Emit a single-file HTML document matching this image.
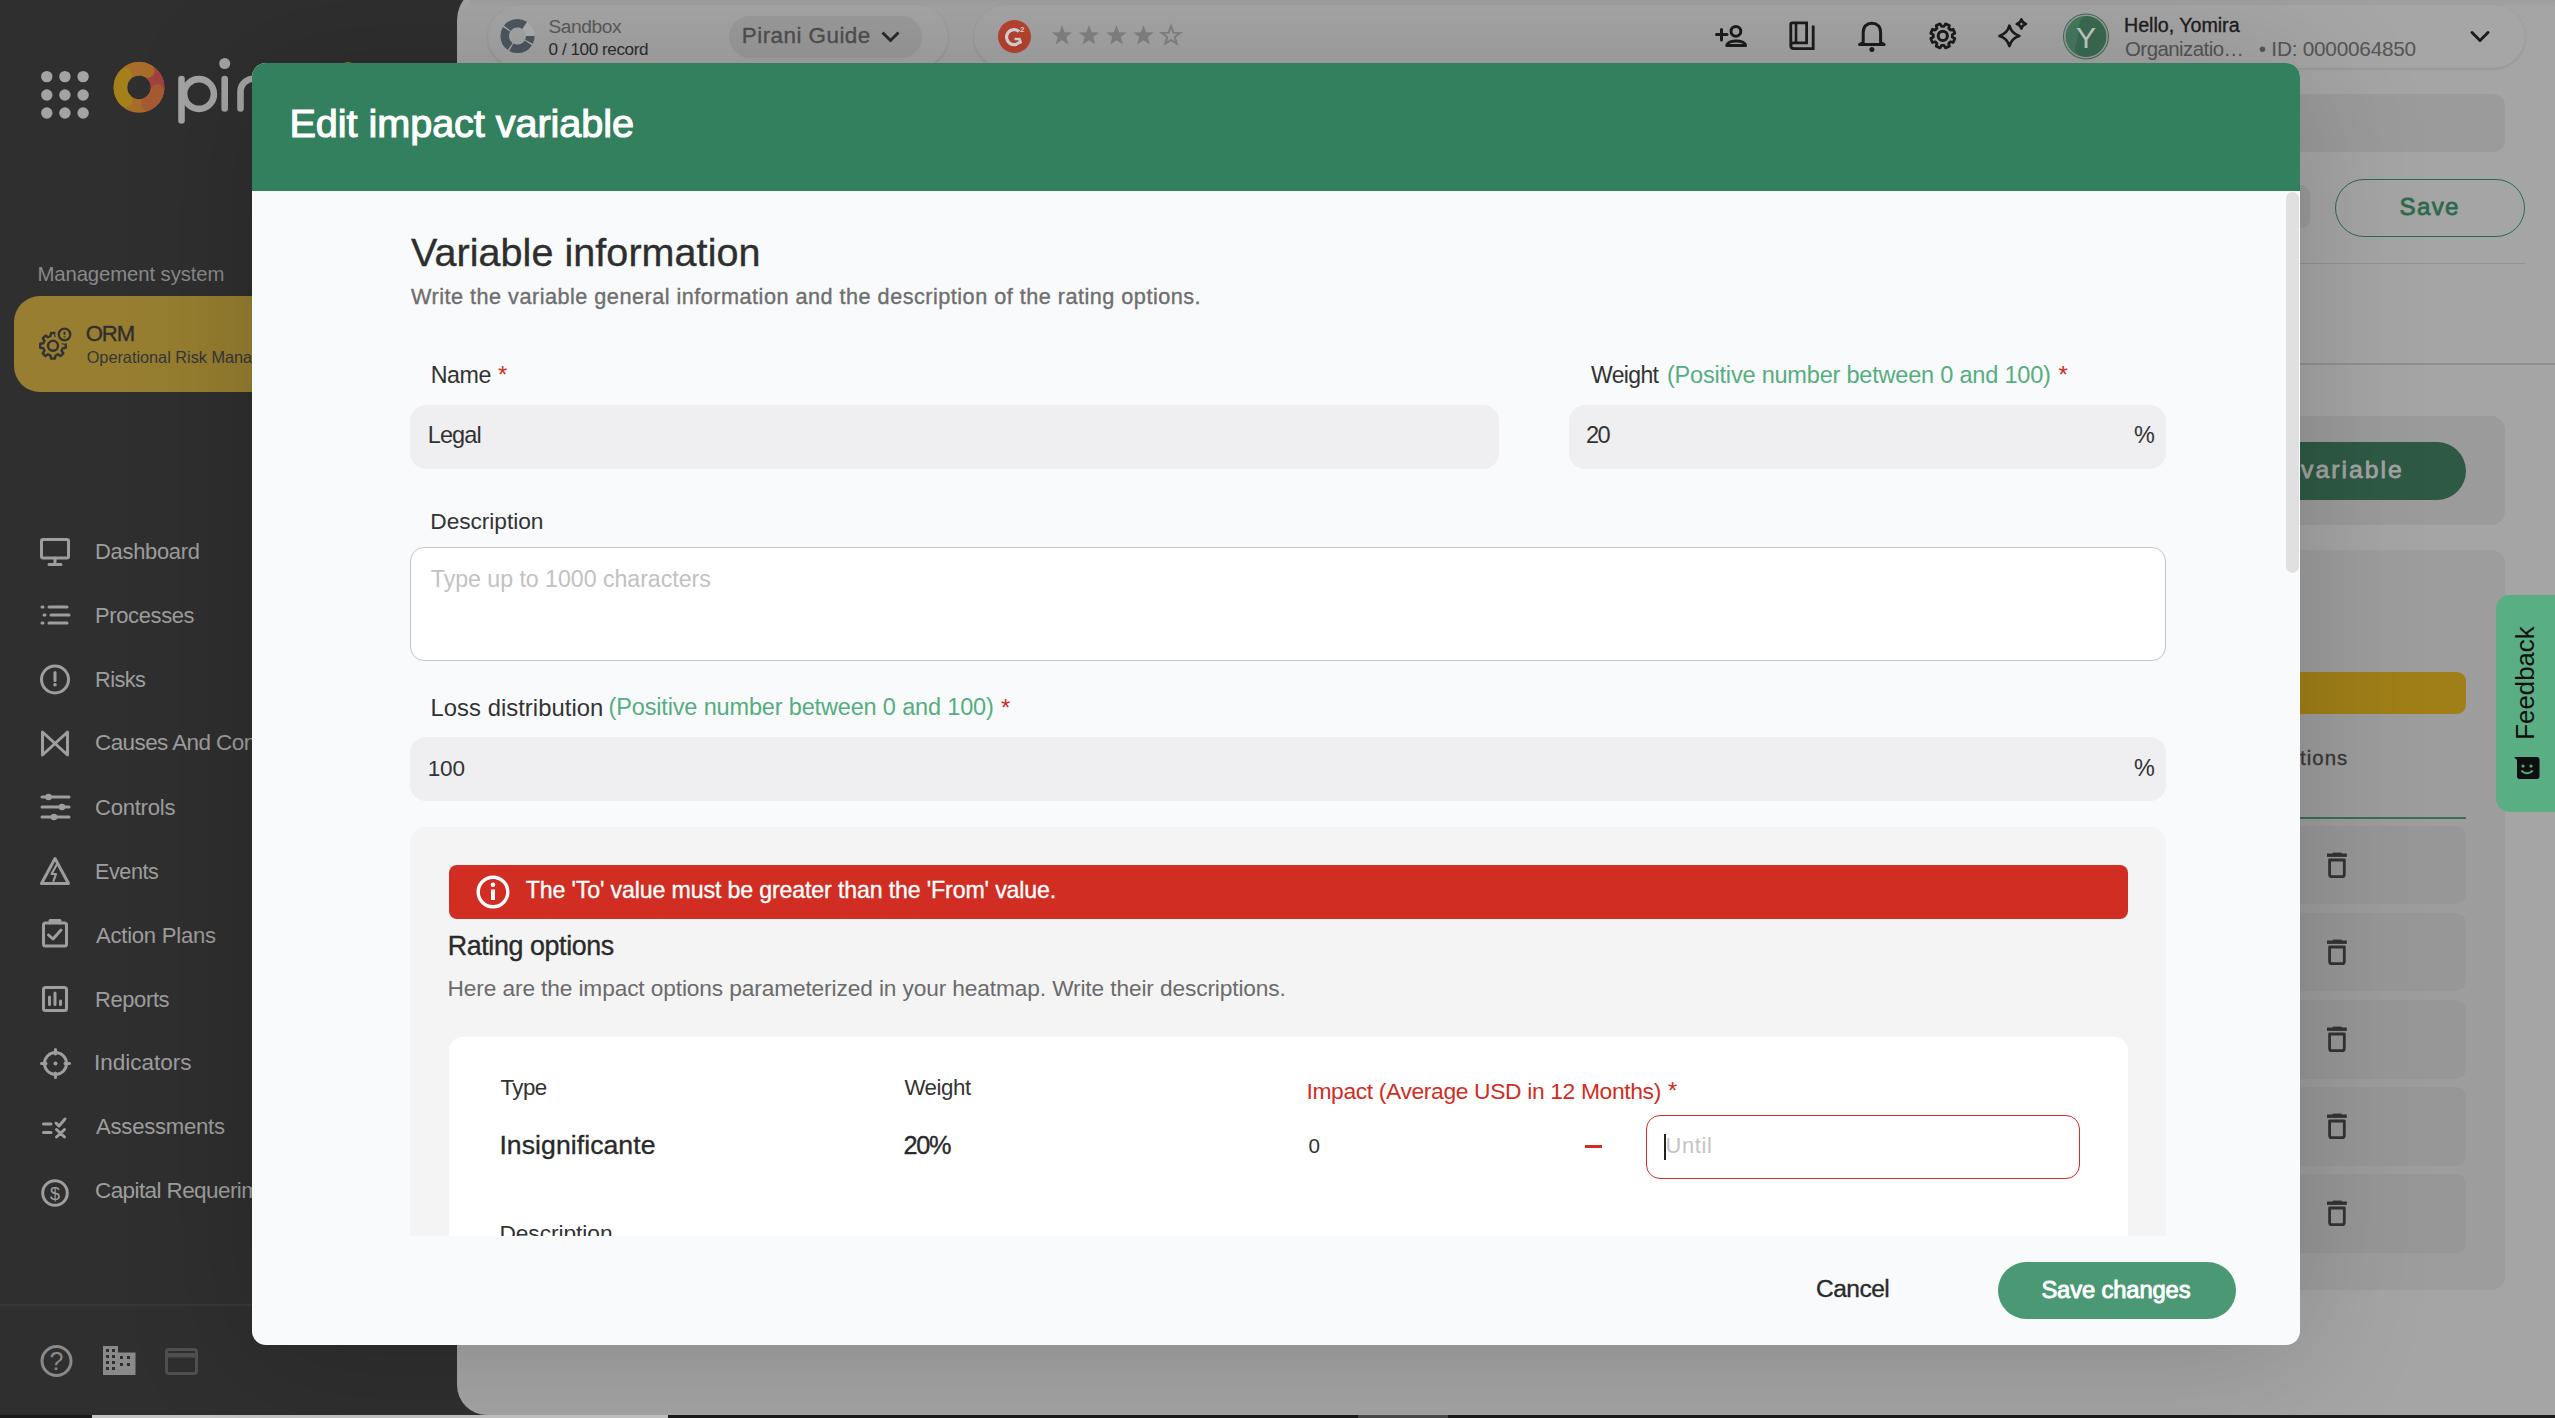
<!DOCTYPE html>
<html><head><meta charset="utf-8">
<style>
*{box-sizing:border-box;margin:0;padding:0}
html,body{width:2555px;height:1418px;overflow:hidden}
body{background:#2f2f2f;font-family:"Liberation Sans",sans-serif;position:relative;color:#333}
.a{position:absolute}
.L{position:absolute;left:0;top:0;width:2555px;height:1418px}
.t{position:absolute;white-space:nowrap;line-height:1}
.m{-webkit-text-stroke:0.35px currentColor}
svg{position:absolute;overflow:visible}
</style></head>
<body>
<!-- ============ BACKGROUND ============ -->
<div class="L" id="bg">
  <!-- bottom strip -->
  <div class="a" style="left:0;top:1415px;width:2555px;height:3px;background:#1b1b1b"></div>
  <div class="a" style="left:92px;top:1415px;width:576px;height:3px;background:#c4c4c4"></div>
  <div class="a" style="left:1358px;top:1415px;width:90px;height:3px;background:#4a4a4a"></div>

  <!-- sidebar logo -->
  <svg style="left:0;top:0" width="460" height="140">
    <g fill="#a3a3a3">
      <circle cx="46.8" cy="76.6" r="5.7"/><circle cx="64.9" cy="76.6" r="5.7"/><circle cx="83.1" cy="76.6" r="5.7"/>
      <circle cx="46.8" cy="95" r="5.7"/><circle cx="64.9" cy="95" r="5.7"/><circle cx="83.1" cy="95" r="5.7"/>
      <circle cx="46.8" cy="113" r="5.7"/><circle cx="64.9" cy="113" r="5.7"/><circle cx="83.1" cy="113" r="5.7"/>
    </g>
    <circle cx="139" cy="87.4" r="18.6" fill="none" stroke="#a86d2a" stroke-width="13.6"/>
    <path d="M 149.67 72.16 A 18.6 18.6 0 0 1 155.86 95.26" fill="none" stroke="#a0433f" stroke-width="13.6" stroke-linecap="butt"/>
    <path d="M 129.70 71.29 A 18.6 18.6 0 0 1 147.73 70.98" fill="none" stroke="#a86d2a" stroke-width="13.6" stroke-linecap="round"/>
    <path d="M 157.19 91.27 A 18.6 18.6 0 0 1 147.73 103.82" fill="none" stroke="#a55a33" stroke-width="13.6" stroke-linecap="round"/>
    <path d="M 125.85 100.55 A 18.6 18.6 0 0 1 125.18 74.95" fill="none" stroke="#a38019" stroke-width="13.6" stroke-linecap="round"/>
    <g fill="none" stroke="#a3a3a3" stroke-width="6.6" stroke-linecap="round">
      <path d="M 181.5 79 L 181.5 120.5"/>
      <circle cx="199" cy="94" r="14.9"/>
      <path d="M 224.7 79 L 224.7 108.5"/>
      <path d="M 240.5 108.5 L 240.5 92 A 13 13 0 0 1 256 79"/>
    </g>
    <circle cx="224.7" cy="63.5" r="5.5" fill="#a3a3a3"/>
    <circle cx="348" cy="71" r="9" fill="#a38019"/>
  </svg>

  <div class="a" style="left:0;top:1304px;width:460px;height:2px;background:#383838"></div>

  <!-- ORM tile -->
  <div class="a" style="left:14px;top:296px;width:460px;height:96px;background:#977e30;border-radius:26px"></div>
  <svg style="left:38px;top:327px" width="34" height="34" viewBox="0 0 34 34">
    <g fill="none" stroke="#333" stroke-width="2.4" stroke-linejoin="round">
      <path d="M12.5 9.5 L16.5 9.5 L17 12.5 L19.5 13.8 L22 12 L24.8 14.8 L23 17.3 L24.2 19.8 L27.3 20.3 L27.3 24.3 L24.2 24.8 L23 27.3 L24.8 29.8 L22 32.6 L19.5 30.8 L17 32 L16.5 35 L12.5 35 L12 32 L9.5 30.8 L7 32.6 L4.2 29.8 L6 27.3 L4.8 24.8 L1.7 24.3 L1.7 20.3 L4.8 19.8 L6 17.3 L4.2 14.8 L7 12 L9.5 13.8 L12 12.5 Z" transform="translate(0.5,-3.5)"/>
      <circle cx="15" cy="18.8" r="5"/>
    </g>
    <circle cx="26.5" cy="7.5" r="9.3" fill="#977e30"/>
    <circle cx="26.5" cy="7.5" r="5.8" fill="none" stroke="#333" stroke-width="2.3"/>
    <path d="M26.5 4.8 L26.5 8 M26.5 9.3 L26.5 10.6" stroke="#333" stroke-width="1.9"/>
  </svg>

  <!-- sidebar nav icons -->
  <svg style="left:0;top:500px" width="90" height="740">
    <g fill="none" stroke="#9e9e9e" stroke-width="3" stroke-linejoin="round" stroke-linecap="round">
      <!-- dashboard monitor -->
      <rect x="41.5" y="39.5" width="27" height="18.5" rx="1.5"/>
      <path d="M55 58 L55 64 M49 64.5 L61 64.5"/>
      <!-- processes list -->
      <path d="M49 107 L67 107 M51 115 L69 115 M49 123 L67 123 M42 107 L43 107 M44 115 L45 115 M42 123 L43 123"/>
      <!-- risks circle ! -->
      <circle cx="55" cy="179.5" r="13.5"/>
      <path d="M55 172.5 L55 180.5"/>
      <!-- causes bowtie -->
      <path d="M42.5 232 L67.5 255 L67.5 232 L42.5 255 Z"/>
      <!-- controls sliders -->
      <path d="M42 297 L69 297 M42 307 L69 307 M42 317 L69 317"/>
      <!-- events triangle -->
      <path d="M55 358.5 L68.5 383.5 L41.5 383.5 Z"/>
      <!-- action plans clipboard -->
      <rect x="43.5" y="423" width="23" height="23" rx="2"/>
      <path d="M50 423 L50 420.5 L60 420.5 L60 423 M48.5 435 L53 439 L61 430"/>
      <!-- reports -->
      <rect x="43.5" y="487.5" width="23" height="23" rx="2"/>
      <path d="M49.5 504.5 L49.5 497 M55 504.5 L55 493 M60.5 504.5 L60.5 501"/>
      <!-- indicators crosshair -->
      <circle cx="55.5" cy="563.5" r="11"/>
      <path d="M55.5 549.5 L55.5 554 M55.5 573 L55.5 577.5 M41.5 563.5 L46 563.5 M65 563.5 L69.5 563.5"/>
      <!-- assessments -->
      <path d="M43.5 624 L51 624 M43.5 632.5 L51 632.5 M56 623 L59 626 L65 619 M56.5 629.5 L64.5 637 M64.5 629.5 L56.5 637"/>
      <!-- capital $ circle -->
      <circle cx="55" cy="693" r="12.3"/>
    </g>
    <g fill="#9e9e9e">
      <circle cx="55" cy="184.8" r="1.8"/>
      <circle cx="48.5" cy="297" r="3.3"/><circle cx="62" cy="307" r="3.3"/><circle cx="54" cy="317" r="3.3"/>
      <circle cx="55.5" cy="563.5" r="2"/>
    </g>
    <path d="M56.5 365 L51.5 374 L56 374 L53.5 381" fill="none" stroke="#9e9e9e" stroke-width="2.2" stroke-linecap="round" stroke-linejoin="round"/>
    <text x="55" y="700" font-family="Liberation Sans" font-size="18" fill="#9e9e9e" text-anchor="middle" style="-webkit-text-stroke:0.6px #9e9e9e">$</text>
  </svg>

  <!-- sidebar bottom icons -->
  <svg style="left:0;top:1330px" width="220" height="60">
    <circle cx="56.5" cy="31" r="14.5" fill="none" stroke="#8a8a8a" stroke-width="3"/>
    <text x="56.5" y="39.5" font-family="Liberation Sans" font-size="25" fill="#8a8a8a" text-anchor="middle" style="-webkit-text-stroke:0.8px #8a8a8a">?</text>
    <path d="M103 16 L118 16 L118 22.5 L135.5 22.5 L135.5 45 L103 45 Z" fill="#8a8a8a"/>
    <g fill="#2f2f2f">
      <rect x="106" y="19" width="3" height="3"/><rect x="112" y="19" width="3" height="3"/>
      <rect x="106" y="25" width="3" height="3"/><rect x="112" y="25" width="3" height="3"/>
      <rect x="106" y="31" width="3" height="3"/><rect x="112" y="31" width="3" height="3"/>
      <rect x="106" y="37" width="3" height="3"/><rect x="112" y="37" width="3" height="3"/>
      <rect x="120" y="26" width="3" height="3"/><rect x="127" y="26" width="3" height="3"/>
      <rect x="120" y="33" width="3" height="3"/><rect x="127" y="33" width="3" height="3"/>
    </g>
    <rect x="166.5" y="19.5" width="30" height="24" rx="2.5" fill="none" stroke="#505050" stroke-width="3"/>
    <rect x="166.5" y="23" width="30" height="4.5" fill="#505050"/>
  </svg>

  <!-- main content area -->
  <div class="a" id="main" style="left:457px;top:-14px;width:2098px;height:1429px;background:#a5a5a5;border-radius:34px 0 0 30px"></div>
  <div class="a" style="left:470px;top:0;width:2085px;height:6px;background:linear-gradient(rgba(0,0,0,0.045),rgba(0,0,0,0.015))"></div>
  <!-- top pills -->
  <div class="a" style="left:488px;top:5px;width:460px;height:63px;background:#a6a6a6;border-radius:32px;box-shadow:0 1px 3px rgba(0,0,0,0.12)"></div>
  <div class="a" style="left:974px;top:5px;width:1551px;height:63px;background:#a6a6a6;border-radius:32px;box-shadow:0 1px 3px rgba(0,0,0,0.12)"></div>
  <div class="a" style="left:729px;top:16px;width:193px;height:42px;background:#9c9c9c;border-radius:21px"></div>
  <!-- sandbox icon -->
  <svg style="left:500px;top:18px" width="36" height="36" viewBox="0 0 36 36">
    <circle cx="17.5" cy="18" r="12.8" fill="none" stroke="#b0b0b0" stroke-width="8.6"/>
    <circle cx="17.5" cy="18" r="12.8" fill="none" stroke="#4d5760" stroke-width="8.6" stroke-dasharray="6 1.2 19.3 1.2 19.3 1.2 19.3 12.9" />
  </svg>
  <!-- chevron pirani guide -->
  <svg style="left:880px;top:30px" width="22" height="14"><path d="M2.5 2.5 L10.5 10.5 L18.5 2.5" fill="none" stroke="#2c2c2c" stroke-width="3"/></svg>
  <!-- G2 -->
  <div class="a" style="left:998px;top:19.5px;width:33px;height:33px;border-radius:50%;background:#b8442f"></div>
  <svg style="left:998px;top:19.5px" width="33" height="33" viewBox="0 0 33 33">
    <path d="M21 11.5 A 7.5 7.5 0 1 0 22.5 21" fill="none" stroke="#d8d8d8" stroke-width="3.2"/>
    <path d="M16.5 19 L21.5 19 L23 23.5" fill="none" stroke="#d8d8d8" stroke-width="2.6"/>
    <text x="22" y="12" font-family="Liberation Sans" font-size="8" font-weight="bold" fill="#d8d8d8">2</text>
  </svg>
  <!-- stars -->
  <svg style="left:1050px;top:23px" width="140" height="26" viewBox="0 0 140 26">
    <g fill="#838383">
      <path d="M12 2 L14.6 9.2 L22.3 9.4 L16.2 14.1 L18.4 21.5 L12 17.2 L5.6 21.5 L7.8 14.1 L1.7 9.4 L9.4 9.2 Z"/>
      <path transform="translate(27,0)" d="M12 2 L14.6 9.2 L22.3 9.4 L16.2 14.1 L18.4 21.5 L12 17.2 L5.6 21.5 L7.8 14.1 L1.7 9.4 L9.4 9.2 Z"/>
      <path transform="translate(54.5,0)" d="M12 2 L14.6 9.2 L22.3 9.4 L16.2 14.1 L18.4 21.5 L12 17.2 L5.6 21.5 L7.8 14.1 L1.7 9.4 L9.4 9.2 Z"/>
      <path transform="translate(81.5,0)" d="M12 2 L14.6 9.2 L22.3 9.4 L16.2 14.1 L18.4 21.5 L12 17.2 L5.6 21.5 L7.8 14.1 L1.7 9.4 L9.4 9.2 Z"/>
    </g>
    <path transform="translate(110.2,1.4) scale(0.9)" d="M12 2 L14.6 9.2 L22.3 9.4 L16.2 14.1 L18.4 21.5 L12 17.2 L5.6 21.5 L7.8 14.1 L1.7 9.4 L9.4 9.2 Z" fill="none" stroke="#838383" stroke-width="2.2"/>
  </svg>
  <!-- right icons -->
  <svg style="left:1700px;top:10px" width="800" height="56">
    <g fill="none" stroke="#1c1c1c" stroke-width="3" stroke-linecap="round" stroke-linejoin="round">
      <!-- add person -->
      <path d="M16.5 24.6 L27 24.6 M21.5 19.5 L21.5 30"/>
      <circle cx="35.9" cy="21.3" r="4.9"/>
      <path d="M26.8 35.5 C27.5 29.5 45 29.5 45.5 35.5 Z"/>
      <!-- book -->
      <path d="M90.8 36.5 L90.8 14.2 Q90.8 12.8 92.3 12.8 L106.6 12.8 L106.6 32.8 L93.8 32.8 Q90.8 32.8 90.8 35.5 Q90.8 38.6 93.8 38.6 L113.2 38.6 L113.2 15.6" stroke-width="2.8" stroke-linecap="butt" stroke-linejoin="miter"/>
      <path d="M96 13 L96 32.5" stroke-width="2.6"/>
      <!-- bell -->
      <path d="M163.2 32.5 L163.2 22.5 C163.2 16.5 166.8 13.2 171.9 13.2 C177 13.2 180.6 16.5 180.6 22.5 L180.6 32.5 L184.2 34.6 L159.6 34.6 Z"/>
      <!-- gear -->
      <circle cx="242.8" cy="25.9" r="4.6"/>
      <path d="M252.32 27.15 L254.81 28.56 L253.17 32.51 L250.42 31.74 L248.64 33.52 L249.41 36.27 L245.46 37.91 L244.05 35.42 L241.55 35.42 L240.14 37.91 L236.19 36.27 L236.96 33.52 L235.18 31.74 L232.43 32.51 L230.79 28.56 L233.28 27.15 L233.28 24.65 L230.79 23.24 L232.43 19.29 L235.18 20.06 L236.96 18.28 L236.19 15.53 L240.14 13.89 L241.55 16.38 L244.05 16.38 L245.46 13.89 L249.41 15.53 L248.64 18.28 L250.42 20.06 L253.17 19.29 L254.81 23.24 L252.32 24.65 Z" stroke-width="2.8"/>
      <!-- sparkle -->
      <path d="M309.40 15.70 Q311.60 23.66 319.40 25.90 Q311.60 28.14 309.40 36.10 Q307.20 28.14 299.40 25.90 Q307.20 23.66 309.40 15.70 Z" stroke-width="2.6"/>
      <path d="M321.40 9.40 Q322.32 13.08 326.00 14.00 Q322.32 14.92 321.40 18.60 Q320.48 14.92 316.80 14.00 Q320.48 13.08 321.40 9.40 Z" stroke-width="2.6"/>
      <!-- chevron -->
      <path d="M772 22.5 L780 30.5 L788 22.5"/>
    </g>
    <circle cx="171.9" cy="39.6" r="2.5" fill="#1c1c1c"/>
    <circle cx="386" cy="26.5" r="23" fill="#3a6b51"/>
    <path d="M386 6 C 375 10, 381 24, 376 34 C 373 40, 378 45, 383 47 A 20.5 20.5 0 0 1 386 6 Z" fill="#467a5f"/>
    <circle cx="386" cy="26.5" r="21.2" fill="none" stroke="#9a9f9c" stroke-width="1.6"/>
    <text x="386" y="37.8" font-family="Liberation Sans" font-size="30" fill="#c4c8c6" text-anchor="middle">Y</text>
  </svg>

  <!-- right side content (behind modal) -->
  <div class="a" style="left:2260px;top:94px;width:245px;height:58px;background:#9b9b9b;border-radius:12px"></div>
  <div class="a" style="left:2260px;top:185px;width:50px;height:44px;background:#9b9b9b;border-radius:10px"></div>
  <div class="a" style="left:2335px;top:179px;width:190px;height:58px;border:1.5px solid #2f6b4f;border-radius:29px"></div>
  <div class="a" style="left:2260px;top:263px;width:265px;height:1px;background:#939393"></div>
  <div class="a" style="left:2260px;top:363px;width:295px;height:2px;background:#909090"></div>
  <div class="a" style="left:2260px;top:416px;width:245px;height:109px;background:#9b9b9b;border-radius:14px"></div>
  <div class="a" style="left:2200px;top:442px;width:266px;height:58px;background:#2e5a45;border-radius:29px"></div>
  <div class="a" style="left:2260px;top:550px;width:245px;height:740px;background:#9d9d9d;border-radius:14px"></div>
  <div class="a" style="left:2260px;top:672px;width:206px;height:42px;background:#a07f18;border-radius:9px"></div>
  <div class="a" style="left:2260px;top:817px;width:206px;height:2px;background:#3e6e55"></div>
  <div class="a" style="left:2260px;top:826px;width:206px;height:78px;background:#979797;border-radius:10px"></div>
  <div class="a" style="left:2260px;top:913px;width:206px;height:78px;background:#979797;border-radius:10px"></div>
  <div class="a" style="left:2260px;top:1000px;width:206px;height:79px;background:#979797;border-radius:10px"></div>
  <div class="a" style="left:2260px;top:1087px;width:206px;height:79px;background:#979797;border-radius:10px"></div>
  <div class="a" style="left:2260px;top:1174px;width:206px;height:79px;background:#979797;border-radius:10px"></div>
  <svg style="left:2320px;top:845px" width="40" height="400">
    <g fill="none" stroke="#333" stroke-width="2.8" stroke-linejoin="round">
      <path d="M9.6 15 L9.6 29.4 Q9.6 31.6 11.8 31.6 L22.1 31.6 Q24.3 31.6 24.3 29.4 L24.3 15 Z"/>
      <path transform="translate(0,87)" d="M9.6 15 L9.6 29.4 Q9.6 31.6 11.8 31.6 L22.1 31.6 Q24.3 31.6 24.3 29.4 L24.3 15 Z"/>
      <path transform="translate(0,174)" d="M9.6 15 L9.6 29.4 Q9.6 31.6 11.8 31.6 L22.1 31.6 Q24.3 31.6 24.3 29.4 L24.3 15 Z"/>
      <path transform="translate(0,261)" d="M9.6 15 L9.6 29.4 Q9.6 31.6 11.8 31.6 L22.1 31.6 Q24.3 31.6 24.3 29.4 L24.3 15 Z"/>
      <path transform="translate(0,348)" d="M9.6 15 L9.6 29.4 Q9.6 31.6 11.8 31.6 L22.1 31.6 Q24.3 31.6 24.3 29.4 L24.3 15 Z"/>
    </g>
    <rect x="7" y="8.5" width="19.8" height="3.4" fill="#333"/><rect x="12.7" y="7.6" width="9" height="1.5" fill="#333"/><rect x="7" y="95.5" width="19.8" height="3.4" fill="#333"/><rect x="12.7" y="94.6" width="9" height="1.5" fill="#333"/><rect x="7" y="182.5" width="19.8" height="3.4" fill="#333"/><rect x="12.7" y="181.6" width="9" height="1.5" fill="#333"/><rect x="7" y="269.5" width="19.8" height="3.4" fill="#333"/><rect x="12.7" y="268.6" width="9" height="1.5" fill="#333"/><rect x="7" y="356.5" width="19.8" height="3.4" fill="#333"/><rect x="12.7" y="355.6" width="9" height="1.5" fill="#333"/>
  </svg>
  <!-- feedback tab -->
  <div class="a" style="left:2496px;top:595px;width:70px;height:217px;background:#5aae84;border-radius:14px 0 0 14px"></div>
  <div class="t" style="left:2526px;top:683px;font-size:25.8px;color:#0f0f0f;transform:translate(-50%,-50%) rotate(-90deg);">Feedback</div>
  <svg style="left:2512px;top:754px" width="30" height="28" viewBox="0 0 30 28">
    <path d="M2 3 L25 3 C26.5 3 27.5 4 27.5 5.5 L27.5 22.5 C27.5 24 26.5 25 25 25 L7.5 25 C6 25 5 24 5 22.5 L5 6 Z" fill="#0f0f0f"/>
    <circle cx="11" cy="12" r="1.6" fill="#5aae84"/><circle cx="19" cy="12" r="1.6" fill="#5aae84"/>
    <path d="M9.5 16.5 C12 20 18 20 20.5 16.5" fill="none" stroke="#5aae84" stroke-width="2"/>
  </svg>
  <div class="t" style="left:37.40px;top:263.79px;font-size:20.33px;font-weight:normal;color:#898989;letter-spacing:-0.101px;">Management system</div>
<div class="t" style="left:85.70px;top:323.26px;font-size:22.14px;font-weight:normal;color:#2e2e2e;letter-spacing:-1.094px;-webkit-text-stroke:0.35px currentColor;">ORM</div>
<div class="t" style="left:86.70px;top:349.02px;font-size:16.28px;font-weight:normal;color:#363636;letter-spacing:0.000px;">Operational Risk Management</div>
<div class="t" style="left:95.00px;top:540.64px;font-size:21.92px;font-weight:normal;color:#9e9e9e;letter-spacing:-0.273px;">Dashboard</div>
<div class="t" style="left:95.00px;top:604.61px;font-size:21.95px;font-weight:normal;color:#9e9e9e;letter-spacing:-0.356px;">Processes</div>
<div class="t" style="left:95.00px;top:668.81px;font-size:21.72px;font-weight:normal;color:#9e9e9e;letter-spacing:-0.557px;">Risks</div>
<div class="t" style="left:95.00px;top:732.12px;font-size:22.53px;font-weight:normal;color:#9e9e9e;letter-spacing:0.000px;letter-spacing:-0.6px;">Causes And Consequences</div>
<div class="t" style="left:95.00px;top:796.50px;font-size:22.09px;font-weight:normal;color:#9e9e9e;letter-spacing:-0.253px;">Controls</div>
<div class="t" style="left:95.00px;top:860.93px;font-size:21.58px;font-weight:normal;color:#9e9e9e;letter-spacing:-0.428px;">Events</div>
<div class="t" style="left:96.00px;top:924.50px;font-size:22.08px;font-weight:normal;color:#9e9e9e;letter-spacing:-0.244px;">Action Plans</div>
<div class="t" style="left:95.00px;top:988.62px;font-size:21.94px;font-weight:normal;color:#9e9e9e;letter-spacing:-0.374px;">Reports</div>
<div class="t" style="left:94.00px;top:1052.14px;font-size:22.51px;font-weight:normal;color:#9e9e9e;letter-spacing:-0.011px;">Indicators</div>
<div class="t" style="left:96.00px;top:1116.46px;font-size:22.14px;font-weight:normal;color:#9e9e9e;letter-spacing:-0.250px;">Assessments</div>
<div class="t" style="left:95.00px;top:1180.12px;font-size:22.53px;font-weight:normal;color:#9e9e9e;letter-spacing:0.000px;letter-spacing:-0.6px;">Capital Requeriments</div>
<div class="t" style="left:548.50px;top:16.75px;font-size:19.19px;font-weight:normal;color:#5a5a5a;letter-spacing:-0.426px;">Sandbox</div>
<div class="t" style="left:548.50px;top:40.50px;font-size:17.13px;font-weight:normal;color:#2c2c2c;letter-spacing:-0.434px;">0 / 100 record</div>
<div class="t" style="left:741.80px;top:24.85px;font-size:22.38px;font-weight:normal;color:#505050;letter-spacing:0.483px;-webkit-text-stroke:0.35px currentColor;">Pirani Guide</div>
<div class="t" style="left:2124.00px;top:15.83px;font-size:19.69px;font-weight:normal;color:#1e1e1e;letter-spacing:-0.034px;-webkit-text-stroke:0.35px currentColor;">Hello, Yomira</div>
<div class="t" style="left:2125.00px;top:39.18px;font-size:20.45px;font-weight:normal;color:#555;letter-spacing:-0.538px;">Organizatio…</div>
<div class="t" style="left:2258.80px;top:38.89px;font-size:20.79px;font-weight:normal;color:#555;letter-spacing:-0.240px;">• ID: 0000064850</div>
<div class="t" style="left:2399.60px;top:195.47px;font-size:24.13px;font-weight:normal;color:#2d6a4d;letter-spacing:1.285px;-webkit-text-stroke:0.8px #2d6a4d;">Save</div>
<div class="t" style="left:2301.00px;top:458.08px;font-size:24.71px;font-weight:normal;color:#a3a3a3;letter-spacing:2.039px;-webkit-text-stroke:0.8px #a3a3a3;">variable</div>
<div class="t" style="left:2300.00px;top:748.47px;font-size:20.35px;font-weight:normal;color:#383838;letter-spacing:1.056px;-webkit-text-stroke:0.35px currentColor;">tions</div>
</div>

<!-- ============ MODAL ============ -->
<div class="a" style="left:252px;top:63px;width:2048px;height:1282px;background:#f9fafb;border-radius:14px;overflow:hidden;box-shadow:0 8px 130px rgba(0,0,0,0.18)">
  <div class="a" style="left:0;top:0;width:2048px;height:128px;background:#33805e"></div>
  <div class="a" style="left:2034px;top:129px;width:13px;height:381px;background:#e0e0e0;border-radius:7px"></div>
</div>
<!-- scroll content -->
<div class="L" style="clip-path:inset(191px 255px 182px 252px)">
  <div class="a" style="left:410px;top:405px;width:1089px;height:64px;background:#efeff1;border-radius:16px"></div>
  <div class="a" style="left:1569px;top:405px;width:597px;height:64px;background:#efeff1;border-radius:16px"></div>
  <div class="a" style="left:410px;top:547px;width:1756px;height:114px;background:#fff;border:1.5px solid #c4c4c4;border-radius:14px"></div>
  <div class="a" style="left:410px;top:737px;width:1756px;height:64px;background:#efeff1;border-radius:16px"></div>
  <div class="a" style="left:410px;top:827px;width:1756px;height:600px;background:#f4f4f4;border-radius:16px"></div>
  <div class="a" style="left:449px;top:865px;width:1679px;height:54px;background:#d12d22;border-radius:8px"></div>
  <svg style="left:470px;top:869px" width="46" height="46" viewBox="0 0 46 46">
    <circle cx="23" cy="23" r="14.8" fill="none" stroke="#fff" stroke-width="3.4"/>
    <rect x="21" y="20.5" width="4" height="10.5" fill="#fff"/>
    <circle cx="23" cy="15.8" r="2.3" fill="#fff"/>
  </svg>
  <div class="a" style="left:449px;top:1037px;width:1679px;height:400px;background:#fff;border-radius:14px"></div>
  <div class="a" style="left:1585px;top:1145px;width:17px;height:3px;background:#d12d22"></div>
  <div class="a" style="left:1646px;top:1115px;width:434px;height:64px;background:#fff;border:1.5px solid #d12d22;border-radius:14px"></div>
  <div class="a" style="left:1664px;top:1134px;width:2px;height:26px;background:#222"></div>
  <div class="t" style="left:411.00px;top:232.53px;font-size:39.53px;font-weight:normal;color:#2e2e2e;letter-spacing:0.051px;-webkit-text-stroke:0.35px currentColor;">Variable information</div>
<div class="t" style="left:411.00px;top:285.86px;font-size:21.66px;font-weight:normal;color:#6e6e6e;letter-spacing:0.485px;-webkit-text-stroke:0.35px currentColor;">Write the variable general information and the description of the rating options.</div>
<div class="t" style="left:430.70px;top:363.50px;font-size:23.26px;font-weight:normal;color:#333;letter-spacing:-0.396px;">Name</div>
<div class="t" style="left:498.00px;top:362.89px;font-size:23.98px;font-weight:normal;color:#d12d22;letter-spacing:0.000px;">*</div>
<div class="t" style="left:427.80px;top:424.28px;font-size:23.53px;font-weight:normal;color:#333;letter-spacing:-0.928px;">Legal</div>
<div class="t" style="left:1591.00px;top:364.13px;font-size:23.00px;font-weight:normal;color:#333;letter-spacing:-0.647px;">Weight</div>
<div class="t" style="left:1667.00px;top:363.67px;font-size:23.54px;font-weight:normal;color:#55ad80;letter-spacing:-0.214px;">(Positive number between 0 and 100)</div>
<div class="t" style="left:2058.60px;top:363.29px;font-size:23.98px;font-weight:normal;color:#d12d22;letter-spacing:0.000px;">*</div>
<div class="t" style="left:1586.00px;top:424.31px;font-size:23.61px;font-weight:normal;color:#333;letter-spacing:-1.630px;">20</div>
<div class="t" style="left:2134.00px;top:424.45px;font-size:23.44px;font-weight:normal;color:#333;letter-spacing:0.000px;">%</div>
<div class="t" style="left:430.30px;top:509.75px;font-size:22.73px;font-weight:normal;color:#333;letter-spacing:-0.050px;">Description</div>
<div class="t" style="left:430.80px;top:568.38px;font-size:23.18px;font-weight:normal;color:#c2c2c2;letter-spacing:-0.034px;">Type up to 1000 characters</div>
<div class="t" style="left:430.50px;top:695.82px;font-size:23.84px;font-weight:normal;color:#333;letter-spacing:0.036px;">Loss distribution</div>
<div class="t" style="left:608.60px;top:696.09px;font-size:23.51px;font-weight:normal;color:#55ad80;letter-spacing:-0.158px;">(Positive number between 0 and 100)</div>
<div class="t" style="left:1001.00px;top:695.82px;font-size:23.84px;font-weight:normal;color:#d12d22;letter-spacing:0.000px;">*</div>
<div class="t" style="left:427.80px;top:757.91px;font-size:22.55px;font-weight:normal;color:#333;letter-spacing:-0.240px;">100</div>
<div class="t" style="left:2134.00px;top:757.15px;font-size:23.44px;font-weight:normal;color:#333;letter-spacing:0.000px;">%</div>
<div class="t" style="left:525.80px;top:878.96px;font-size:23.20px;font-weight:normal;color:#fff;letter-spacing:-0.153px;-webkit-text-stroke:0.35px currentColor;">The 'To' value must be greater than the 'From' value.</div>
<div class="t" style="left:447.80px;top:933.28px;font-size:26.83px;font-weight:normal;color:#2a2a2a;letter-spacing:-0.392px;-webkit-text-stroke:0.35px currentColor;">Rating options</div>
<div class="t" style="left:447.60px;top:976.58px;font-size:22.70px;font-weight:normal;color:#6b6b6b;letter-spacing:-0.120px;">Here are the impact options parameterized in your heatmap. Write their descriptions.</div>
<div class="t" style="left:500.40px;top:1077.28px;font-size:22.35px;font-weight:normal;color:#333;letter-spacing:-0.529px;">Type</div>
<div class="t" style="left:904.40px;top:1077.31px;font-size:22.31px;font-weight:normal;color:#333;letter-spacing:-0.439px;">Weight</div>
<div class="t" style="left:1306.40px;top:1080.17px;font-size:22.83px;font-weight:normal;color:#d12d22;letter-spacing:-0.355px;">Impact (Average USD in 12 Months)</div>
<div class="t" style="left:1668.00px;top:1079.56px;font-size:23.55px;font-weight:normal;color:#d12d22;letter-spacing:0.000px;">*</div>
<div class="t" style="left:499.40px;top:1132.08px;font-size:26.60px;font-weight:normal;color:#2a2a2a;letter-spacing:0.065px;-webkit-text-stroke:0.35px currentColor;">Insignificante</div>
<div class="t" style="left:903.40px;top:1133.19px;font-size:25.29px;font-weight:normal;color:#2a2a2a;letter-spacing:-1.252px;-webkit-text-stroke:0.35px currentColor;">20%</div>
<div class="t" style="left:1308.40px;top:1136.19px;font-size:20.68px;font-weight:normal;color:#333;letter-spacing:0.000px;">0</div>
<div class="t" style="left:1665.50px;top:1135.24px;font-size:21.80px;font-weight:normal;color:#c4c4c4;letter-spacing:0.685px;">Until</div>
<div class="t" style="left:499.40px;top:1222.35px;font-size:22.73px;font-weight:normal;color:#333;letter-spacing:-0.050px;">Description</div>
</div>
<!-- modal header & footer -->
<div class="L">
  <div class="a" style="left:1998px;top:1262px;width:238px;height:57px;background:#4a9974;border-radius:29px"></div>
  <div class="t" style="left:289.50px;top:103.72px;font-size:39.66px;font-weight:normal;color:#fff;letter-spacing:-0.078px;-webkit-text-stroke:1.1px #fff;">Edit impact variable</div>
<div class="t" style="left:1816.00px;top:1277.21px;font-size:24.56px;font-weight:normal;color:#2a2a2a;letter-spacing:-0.531px;-webkit-text-stroke:0.35px currentColor;">Cancel</div>
<div class="t" style="left:2041.40px;top:1277.87px;font-size:23.77px;font-weight:normal;color:#fff;letter-spacing:-0.131px;-webkit-text-stroke:0.9px #fff;">Save changes</div>
</div>
</body></html>
